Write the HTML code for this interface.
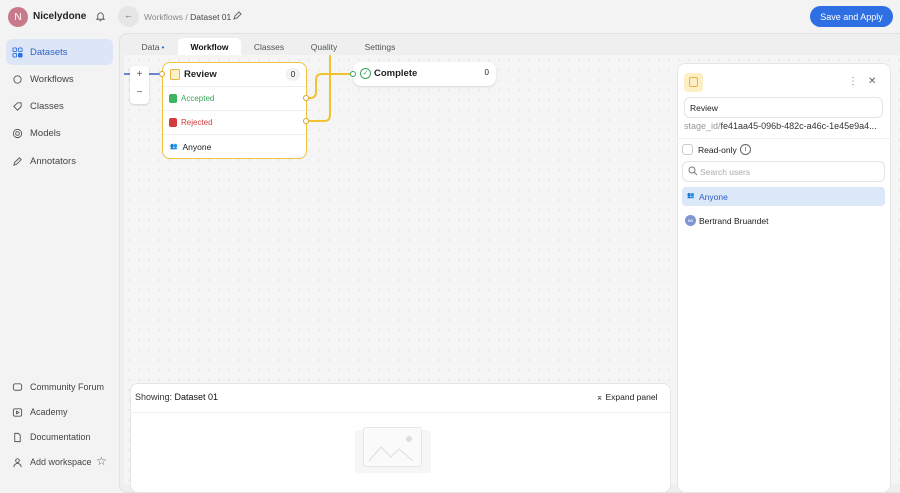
<!DOCTYPE html>
<html><head><style>
*{box-sizing:border-box;margin:0;padding:0}
body{width:900px;height:484px;overflow:hidden;background:#f3f3f3;font-family:"Liberation Sans",sans-serif;font-size:9px;color:#222;position:relative}
.abs{position:absolute}
.nav{position:absolute;left:6px;width:107px;height:26px;display:flex;align-items:center;padding-left:6px;gap:7px;font-size:9.5px;color:#444;border-radius:6px}
.nav svg{width:11px;height:11px}
.dots{background-color:#f5f5f5;background-image:radial-gradient(#e0e0e0 0.7px,transparent 0.9px);background-size:10px 10px}
.row{position:absolute;left:0;right:0;height:24px;border-top:1px solid #eee;display:flex;align-items:center;padding-left:6px;gap:4px;font-size:8px}
.tab{position:absolute;top:38px;height:17px;font-size:8.5px;color:#555;display:flex;align-items:center;justify-content:center}
</style></head><body>
<div class="abs" style="left:8px;top:7px;width:20px;height:20px;border-radius:50%;background:#c77b8a;color:#fff;font-size:10px;display:flex;align-items:center;justify-content:center">N</div>
<div class="abs" style="left:33px;top:11px;font-size:10px;font-weight:bold">Nicelydone</div>
<svg class="abs" style="left:95px;top:11px" width="11" height="11" viewBox="0 0 12 12" fill="none" stroke="#555" stroke-width="1"><path d="M3 8V5a3 3 0 0 1 6 0v3l1 1H2z M5 10.5h2"/></svg>
<div class="abs" style="left:118px;top:6px;width:21px;height:21px;border-radius:50%;background:#e6e6e6"></div>
<div class="abs" style="left:124px;top:10px;font-size:9px;color:#555">←</div>
<div class="abs" style="left:144px;top:12px;font-size:8.5px;color:#888">Workflows / <span style="color:#444">Dataset 01</span></div>
<svg class="abs" style="left:232px;top:11px" width="10" height="10" viewBox="0 0 10 10" fill="none" stroke="#666"><path d="M2 8l1-3 4-4 2 2-4 4z"/></svg>
<div class="abs" style="left:810px;top:6px;width:83px;height:21px;border-radius:11px;background:#2f6fe4;color:#fff;font-size:9px;display:flex;align-items:center;justify-content:center">Save and Apply</div>
<div class="nav" style="top:39px;background:#dde6f6;color:#2f5fc4"><svg viewBox="0 0 12 12" fill="none" stroke="#2f6fe4"><rect x="1" y="1" width="4" height="4" rx="1"/><rect x="7" y="1" width="4" height="4" rx="1"/><rect x="1" y="7" width="4" height="4" rx="1"/><rect x="7" y="7" width="4" height="4" rx="1" fill="#2f6fe4"/></svg>Datasets</div>
<div class="nav" style="top:66px"><svg viewBox="0 0 12 12" fill="none" stroke="#555"><circle cx="6" cy="6" r="4"/></svg>Workflows</div>
<div class="nav" style="top:93px"><svg viewBox="0 0 12 12" fill="none" stroke="#555"><path d="M2 6l4-4h4v4l-4 4z"/></svg>Classes</div>
<div class="nav" style="top:120px"><svg viewBox="0 0 12 12" fill="none" stroke="#555"><circle cx="6" cy="6" r="4.5"/><circle cx="6" cy="6" r="2"/></svg>Models</div>
<div class="nav" style="top:148px"><svg viewBox="0 0 12 12" fill="none" stroke="#555"><path d="M2 10l1-3 5-5 2 2-5 5z"/></svg>Annotators</div>
<div class="nav" style="top:374px;font-size:9px"><svg viewBox="0 0 12 12" fill="none" stroke="#555"><rect x="1.5" y="2" width="9" height="7" rx="2"/></svg>Community Forum</div>
<div class="nav" style="top:399px;font-size:9px"><svg viewBox="0 0 12 12" fill="none" stroke="#555"><rect x="1.5" y="2" width="9" height="8" rx="1.5"/><path d="M5 4.5l2.5 1.5-2.5 1.5z"/></svg>Academy</div>
<div class="nav" style="top:424px;font-size:9px"><svg viewBox="0 0 12 12" fill="none" stroke="#555"><path d="M3 1.5h4l2 2v7H3z"/></svg>Documentation</div>
<div class="nav" style="top:449px;font-size:9px"><svg viewBox="0 0 12 12" fill="none" stroke="#555"><circle cx="6" cy="4" r="2"/><path d="M2 11a4 4 0 0 1 8 0"/></svg>Add workspace</div>
<div class="abs" style="left:96px;top:454px;font-size:12px;color:#666">☆</div>
<div class="abs" style="left:119px;top:33px;width:790px;height:460px;border-radius:8px;background:#efefef;border:1px solid #e2e2e2"></div>
<div class="tab" style="left:130px;width:46px">Data <span style="color:#2f6fe4;margin-left:2px">•</span></div>
<div class="tab" style="left:178px;width:63px;background:#fff;border-radius:5px 5px 0 0;color:#111;font-weight:bold">Workflow</div>
<div class="tab" style="left:243px;width:52px">Classes</div>
<div class="tab" style="left:298px;width:52px">Quality</div>
<div class="tab" style="left:352px;width:56px">Settings</div>
<div class="abs dots" style="left:124px;top:55px;width:776px;height:429px"></div>
<svg class="abs" style="left:0;top:0" width="900" height="484" fill="none">
<path d="M124 74H160" stroke="#3b5fc4" stroke-width="1.5"/>
<path d="M330 55V115q0 6-6 6H306" stroke="#f2c230" stroke-width="2"/>
<path d="M306 98h4q6 0 6-6V80q0-6 6-6H353" stroke="#f2c230" stroke-width="2"/>
</svg>
<div class="abs" style="left:130px;top:66px;width:19px;height:38px;background:#fff;border-radius:4px;box-shadow:0 1px 2px rgba(0,0,0,.15);font-size:10px;color:#555;text-align:center;line-height:18px">+<br>−</div>
<div class="abs" style="left:162px;top:62px;width:145px;height:97px;background:#fff;border:1.5px solid #f0c23c;border-radius:8px;overflow:visible">
 <div style="position:absolute;left:7px;top:6px;width:10px;height:11px;border:1.2px solid #e8b53a;border-radius:2px;background:#fdf1cc"></div>
 <div style="position:absolute;left:21px;top:6px;font-size:9.5px;font-weight:bold">Review</div>
 <div style="position:absolute;right:6px;top:5px;width:14px;height:13px;border-radius:6px;background:#f1f1f1;font-size:8px;text-align:center;line-height:13px">0</div>
 <div class="row" style="top:23px;color:#3aa55a"><span style="width:8px;height:9px;background:#3cb55c;border-radius:2px"></span>Accepted</div>
 <div class="row" style="top:47px;color:#d04040"><span style="width:8px;height:9px;background:#d43a3a;border-radius:2px"></span>Rejected</div>
 <div class="row" style="top:71px;color:#222;font-size:8.5px"><span style="font-size:6px;color:#777;background:#f1f1f1;border-radius:3px;padding:0 1px">👥</span>Anyone</div>
</div>
<div class="abs" style="left:159px;top:71px;width:6px;height:6px;border-radius:50%;background:#fff;border:1px solid #d6a52a"></div>
<div class="abs" style="left:303px;top:95px;width:6px;height:6px;border-radius:50%;background:#fff;border:1px solid #d6a52a"></div>
<div class="abs" style="left:303px;top:118px;width:6px;height:6px;border-radius:50%;background:#fff;border:1px solid #d6a52a"></div>
<div class="abs" style="left:353px;top:62px;width:143px;height:24px;background:#fff;border-radius:8px;box-shadow:0 1px 2px rgba(0,0,0,.12)">
 <div style="position:absolute;left:7px;top:6px;width:11px;height:11px;border-radius:50%;border:1.3px solid #3aa55a;font-size:7px;color:#3aa55a;text-align:center;line-height:9px">✓</div>
 <div style="position:absolute;left:21px;top:6px;font-size:9.5px;font-weight:bold">Complete</div>
 <div style="position:absolute;right:7px;top:6px;font-size:8px">0</div>
</div>
<div class="abs" style="left:350px;top:71px;width:6px;height:6px;border-radius:50%;background:#fff;border:1px solid #3aa55a"></div>
<div class="abs" style="left:677px;top:63px;width:214px;height:430px;background:#fff;border:1px solid #e6e6e6;border-radius:8px"></div>
<div class="abs" style="left:684px;top:73px;width:19px;height:19px;border-radius:4px;background:#fcefc6"></div>
<div class="abs" style="left:689px;top:77px;width:9px;height:10px;border:1.2px solid #e8b53a;border-radius:2px"></div>
<div class="abs" style="left:848px;top:76px;font-size:10px;color:#777">⋮</div>
<div class="abs" style="left:868px;top:76px;font-size:10px;color:#666">✕</div>
<div class="abs" style="left:684px;top:97px;width:199px;height:21px;border:1px solid #e4e4e4;border-radius:6px;font-size:8.5px;padding:5px 5px">Review</div>
<div class="abs" style="left:684px;top:121px;font-size:9px;color:#999;white-space:nowrap">stage_id/<span style="color:#333">fe41aa45-096b-482c-a46c-1e45e9a4...</span></div>
<div class="abs" style="left:677px;top:138px;width:214px;border-top:1px solid #eee"></div>
<div class="abs" style="left:682px;top:144px;width:11px;height:11px;border:1px solid #ccc;border-radius:3px"></div>
<div class="abs" style="left:698px;top:145px;font-size:8.5px">Read-only</div>
<div class="abs" style="left:740px;top:144px;width:11px;height:11px;border:1px solid #666;border-radius:50%;font-size:7px;text-align:center;line-height:9px;color:#555">i</div>
<div class="abs" style="left:682px;top:161px;width:203px;height:21px;border:1px solid #e4e4e4;border-radius:6px"></div>
<svg class="abs" style="left:688px;top:166px" width="10" height="10" viewBox="0 0 10 10" fill="none" stroke="#777"><circle cx="4" cy="4" r="3"/><path d="M6.3 6.3L9 9"/></svg>
<div class="abs" style="left:700px;top:167px;font-size:8.5px;color:#aaa">Search users</div>
<div class="abs" style="left:682px;top:187px;width:203px;height:19px;border-radius:4px;background:#dce7f8"></div>
<div class="abs" style="left:687px;top:192px;font-size:6px;color:#777">👥</div>
<div class="abs" style="left:699px;top:192px;font-size:8.5px;color:#2f5fc4">Anyone</div>
<div class="abs" style="left:685px;top:215px;width:11px;height:11px;border-radius:50%;background:#7d95d3;color:#fff;font-size:4px;text-align:center;line-height:11px">BB</div>
<div class="abs" style="left:699px;top:216px;font-size:8.5px">Bertrand Bruandet</div>
<div class="abs" style="left:130px;top:383px;width:541px;height:110px;background:#fff;border:1px solid #e6e6e6;border-radius:8px"></div>
<div class="abs" style="left:130px;top:412px;width:541px;border-top:1px solid #eee"></div>
<div class="abs" style="left:135px;top:392px;font-size:9px;color:#333">Showing: <span style="color:#111">Dataset 01</span></div>
<div class="abs" style="left:596px;top:392px;font-size:8.5px;color:#222">⌅ Expand panel</div>
<div class="abs" style="left:355px;top:430px;width:76px;height:43px;background:#f6f6f6;border-radius:3px"></div>
<div class="abs" style="left:363px;top:427px;width:59px;height:40px;background:#fafafa;border:1px solid #e6e6e6;border-radius:3px"></div>
<svg class="abs" style="left:363px;top:427px" width="59" height="40" fill="none" stroke="#ddd"><path d="M6 34l12-14 10 10 8-8 14 12"/><circle cx="46" cy="12" r="2.5" fill="#ddd"/></svg>
</body></html>
